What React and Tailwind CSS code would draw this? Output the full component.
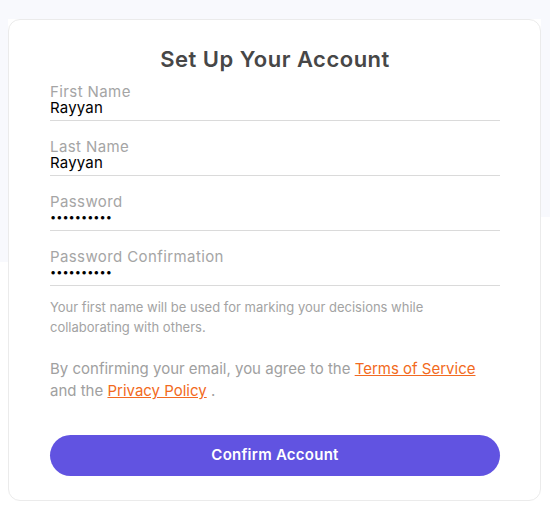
export default function App() {
  const font = { fontFamily: "Inter, 'Noto Sans', sans-serif" };
  const Field = ({ label, value, dots }) => (
    <div className="border-b border-[#dadada] pb-[4px]">
      <div className="text-[15px] leading-[15px] tracking-[0.4px] text-[#a5a5a5]">{label}</div>
      {dots ? (
        <div className="text-[11px] leading-[17px] text-black">••••••••••</div>
      ) : (
        <div className="text-[15px] leading-[17px] tracking-[0.2px] text-black">{value}</div>
      )}
    </div>
  );
  return (
    <div className="flex w-[550px] h-[506px] bg-white" style={font}>
      <div className="w-[8px] h-[262px] bg-[#f8f9fd]" />
      <div className="w-[533px] flex flex-col">
        <div className="h-[19px] bg-[#f8f9fd]" />
        <div className="h-[482px] bg-white border border-[#ebebeb] rounded-[12px] pt-[25px] pl-[41px] pr-[40px] flex flex-col">
          <h1 className="text-center text-[22px] leading-[28px] tracking-[0.5px] font-semibold text-[#474747]">Set Up Your Account</h1>
          <div className="mt-[11px] flex flex-col gap-[18px]">
            <Field label="First Name" value="Rayyan" />
            <Field label="Last Name" value="Rayyan" />
            <Field label="Password" dots />
            <Field label="Password Confirmation" dots />
          </div>
          <p className="mt-[11px] text-[13px] leading-[20px] text-[#a3a3a3]">
            Your first name will be used for marking your decisions while collaborating with others.
          </p>
          <p className="mt-[21px] text-[15px] leading-[22px] text-[#a0a0a0]">
            By confirming your email, you agree to the{" "}
            <a className="text-[#f26a21] underline">Terms of Service</a> and the{" "}
            <a className="text-[#f26a21] underline">Privacy Policy</a> .
          </p>
          <button className="mt-[33px] h-[41px] w-full rounded-full bg-[#6153e1] text-white text-[15px] tracking-[0.25px] font-semibold">
            Confirm Account
          </button>
        </div>
      </div>
      <div className="w-[9px] h-[217px] bg-[#f8f9fd]" />
    </div>
  );
}
